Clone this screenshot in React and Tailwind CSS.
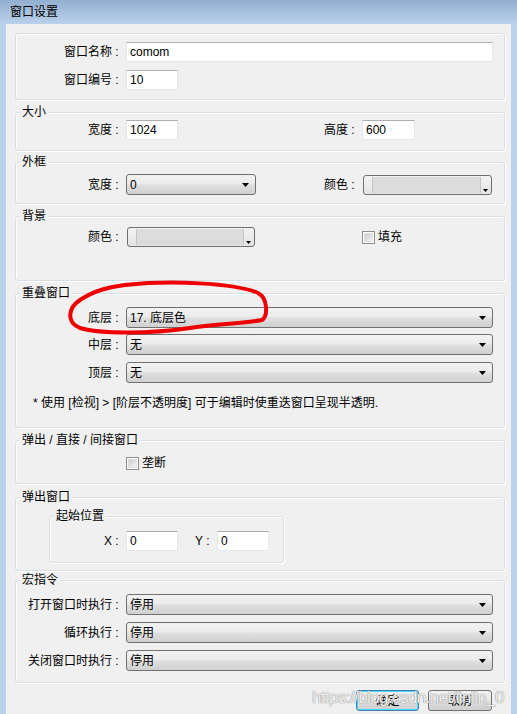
import React from 'react';

// Win7 style "窗口设置" dialog

function Colon() {
    return <span className="inline-block w-[10px] text-center">:</span>;
}

function Label({ text, className = 'w-[110px]' }) {
    return (
        <div className={`${className} shrink-0 flex justify-end pr-[4px] leading-[14px]`}>
            <span>{text}</span>
            <Colon />
        </div>
    );
}

function TextBox({ value, className }) {
    return (
        <div className={`${className} h-[20px] bg-white border border-[#e3e9ef] border-t-[#abadb3] pl-[3px] flex items-center leading-[14px]`}>
            {value}
        </div>
    );
}

function Arrow() {
    return (
        <svg width="7" height="4" viewBox="0 0 7 4" className="shrink-0">
            <polygon points="0,0 7,0 3.5,4" fill="#000" />
        </svg>
    );
}

function Select({ value, className = 'w-[367px]' }) {
    return (
        <div className={`${className} h-[21px] border border-[#707070] rounded-[3px] bg-[linear-gradient(#f3f3f3,#ebebeb_45%,#dedede_55%,#d0d0d0)] flex items-center pl-[3px] pr-[6px] leading-[14px]`}>
            <span className="flex-1 pt-[1px]">{value}</span>
            <Arrow />
        </div>
    );
}

function ColorSelect({ className }) {
    return (
        <div className={`${className} h-[20px] border border-[#707070] rounded-[3px] bg-[linear-gradient(#f3f3f3,#e4e4e4)] flex p-[1px]`}>
            <div className="w-[8px] border-r border-[#c4c4c4]" />
            <div className="flex-1 bg-[#dcdcdc]" />
            <div className="w-[10px] border-l border-[#c4c4c4] flex items-end justify-center pb-[1px]">
                <svg width="5" height="3" viewBox="0 0 5 3">
                    <polygon points="0,0 5,0 2.5,3" fill="#000" />
                </svg>
            </div>
        </div>
    );
}

function CheckBox({ text }) {
    return (
        <div className="flex items-center gap-[3px] leading-[14px]">
            <div className="w-[13px] h-[13px] border border-[#8f8f8f] bg-white p-[1px]">
                <div className="w-full h-full bg-[linear-gradient(135deg,#cbcbcb,#f4f4f4)] border border-[#e0e0e0]" />
            </div>
            <span>{text}</span>
        </div>
    );
}

function Group({ title, className, children }) {
    return (
        <div className={`${className} shrink-0 border border-[#d5dfe5] rounded-[3px] shadow-[inset_1px_1px_0_#fff,1px_1px_0_#fff]`}>
            {title && (
                <div className="-mt-[8px] ml-[4px] px-[2px] w-fit bg-[#f0f0f0] leading-[14px]">{title}</div>
            )}
            {children}
        </div>
    );
}

function Button({ text, focused }) {
    return (
        <div
            className={`h-[21px] rounded-[3px] border flex items-center justify-center leading-[14px] bg-[linear-gradient(#f2f2f2,#ebebeb_45%,#dddddd_55%,#cfcfcf)] ${
                focused ? 'w-[63px] border-[#3c7fb1] shadow-[inset_0_0_0_1px_#48d8fb]' : 'w-[64px] border-[#707070]'
            }`}
        >
            {text}
        </div>
    );
}

export default function App() {
    return (
        <div className="relative w-[517px] h-[714px] overflow-hidden flex flex-col text-[12px] text-black font-['Liberation_Sans','Noto_Sans_CJK_SC',sans-serif] bg-[#bad2eb]">
            {/* title bar */}
            <div className="h-[24px] shrink-0 bg-[linear-gradient(#93afcf,#b9d1ea)] flex items-center pl-[10px] leading-[14px]">
                窗口设置
            </div>

            <div className="flex-1 flex px-[6px]">
                <div className="flex-1 bg-[#f0f0f0] pl-[9px] pr-[6px] pt-[9px] flex flex-col">
                    {/* name / number */}
                    <Group className="h-[67px]">
                        <div className="flex items-center mt-[8px]">
                            <Label text="窗口名称" />
                            <TextBox value="comom" className="w-[367px]" />
                        </div>
                        <div className="flex items-center mt-[8px]">
                            <Label text="窗口编号" />
                            <TextBox value="10" className="w-[52px]" />
                        </div>
                    </Group>

                    {/* 大小 */}
                    <Group title="大小" className="h-[39px] mt-[12px]">
                        <div className="flex items-center mt-[1px]">
                            <Label text="宽度" />
                            <div className="w-[236px] flex items-center justify-between">
                                <TextBox value="1024" className="w-[52px]" />
                                <Label text="高度" className="" />
                            </div>
                            <TextBox value="600" className="w-[53px]" />
                        </div>
                    </Group>

                    {/* 外框 */}
                    <Group title="外框" className="h-[42px] mt-[11px]">
                        <div className="flex items-center mt-[5px]">
                            <Label text="宽度" />
                            <div className="w-[236px] flex items-center justify-between">
                                <Select value="0" className="w-[130px]" />
                                <Label text="颜色" className="" />
                            </div>
                            <ColorSelect className="w-[129px] ml-[1px]" />
                        </div>
                    </Group>

                    {/* 背景 */}
                    <Group title="背景" className="h-[65px] mt-[12px]">
                        <div className="flex items-center mt-[4px]">
                            <Label text="颜色" />
                            <div className="w-[236px] flex items-center">
                                <ColorSelect className="w-[128px] ml-[1px]" />
                            </div>
                            <CheckBox text="填充" />
                        </div>
                    </Group>

                    {/* 重叠窗口 */}
                    <Group title="重叠窗口" className="h-[135px] mt-[12px]">
                        <div className="flex items-center mt-[7px]">
                            <Label text="底层" />
                            <Select value="17. 底层色" />
                        </div>
                        <div className="flex items-center mt-[6px]">
                            <Label text="中层" />
                            <Select value="无" />
                        </div>
                        <div className="flex items-center mt-[7px]">
                            <Label text="顶层" />
                            <Select value="无" />
                        </div>
                        <div className="mt-[13px] pl-[17px] leading-[14px]">
                            * 使用 [检视] &gt; [阶层不透明度] 可于编辑时使重迭窗口呈现半透明.
                        </div>
                    </Group>

                    {/* 弹出 / 直接 / 间接窗口 */}
                    <Group title="弹出 / 直接 / 间接窗口" className="h-[44px] mt-[12px]">
                        <div className="flex mt-[9px] pl-[110px]">
                            <CheckBox text="垄断" />
                        </div>
                    </Group>

                    {/* 弹出窗口 */}
                    <Group title="弹出窗口" className="h-[74px] mt-[13px]">
                        <Group title="起始位置" className="h-[47px] w-[235px] mt-[12px] ml-[33px]">
                            <div className="flex items-center mt-[8px]">
                                <Label text="X" className="w-[76px]" />
                                <TextBox value="0" className="w-[52px]" />
                                <Label text="Y" className="w-[39px]" />
                                <TextBox value="0" className="w-[52px]" />
                            </div>
                        </Group>
                    </Group>

                    {/* 宏指令 */}
                    <Group title="宏指令" className="h-[103px] mt-[9px]">
                        <div className="flex items-center mt-[7px]">
                            <Label text="打开窗口时执行" />
                            <Select value="停用" />
                        </div>
                        <div className="flex items-center mt-[7px]">
                            <Label text="循环执行" />
                            <Select value="停用" />
                        </div>
                        <div className="flex items-center mt-[7px]">
                            <Label text="关闭窗口时执行" />
                            <Select value="停用" />
                        </div>
                    </Group>

                    <div className="flex justify-end gap-[9px] pr-[13px] mt-[7px]">
                        <Button text="确定" focused />
                        <Button text="取消" />
                    </div>
                </div>
            </div>

            {/* red hand-drawn annotation */}
            <svg className="absolute left-0 top-0 pointer-events-none" width="517" height="714" viewBox="0 0 517 714">
                <path
                    d="M 125 285 C 170 280, 235 283, 258 293 C 268 298, 268 316, 262 320 C 240 324, 215 324, 190 328 C 150 334, 100 334, 80 328 C 66 322, 68 308, 80 300 C 95 290, 110 287, 125 285 Z"
                    fill="none"
                    stroke="#ee0000"
                    strokeWidth="4"
                    strokeLinejoin="round"
                />
            </svg>

            {/* watermark */}
            <div className="absolute left-[312px] top-[688px] text-[17px] leading-[20px] tracking-[-0.6px] text-white/85 [text-shadow:0_0_1px_#8a8a8a,0_0_1px_#8a8a8a] pointer-events-none">
                https://blog.csdn.net/linlin_0
            </div>
        </div>
    );
}
